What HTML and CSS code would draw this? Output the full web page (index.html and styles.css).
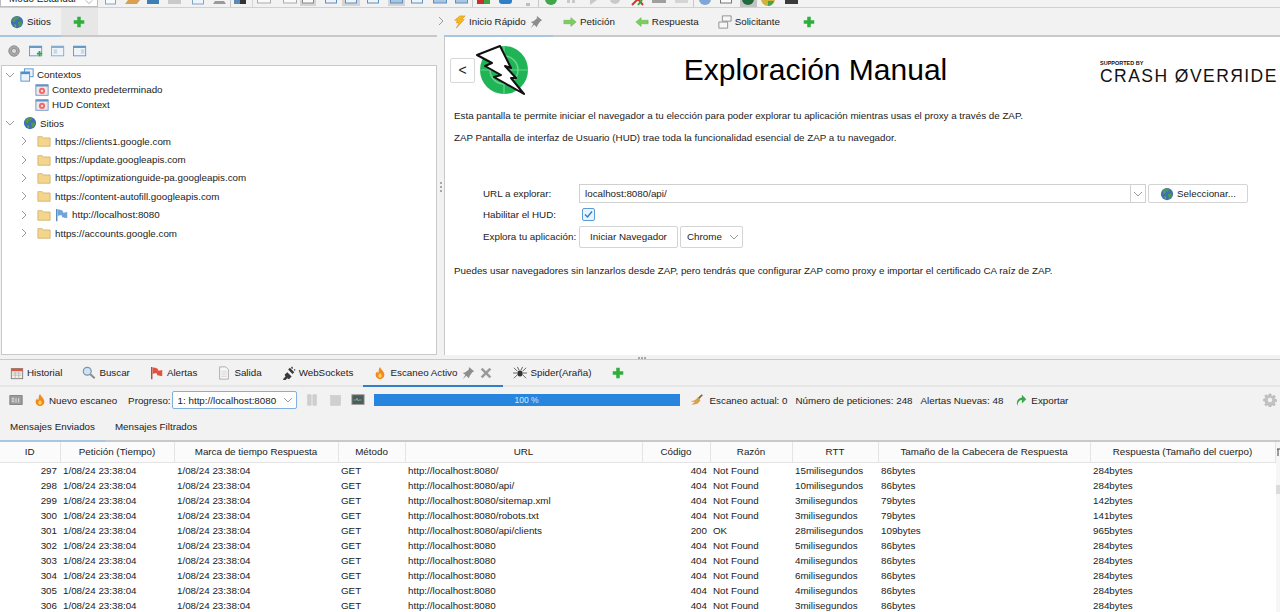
FILE: index.html
```html
<!DOCTYPE html>
<html lang="es">
  <head>
    <meta charset="UTF-8" />
    <title>ZAP - Exploración Manual</title>
    <link rel="stylesheet" href="styles.css">
  </head>
  <body>
    <!-- shared icons -->
    <svg class="defs" width="0" height="0">
      <symbol id="i-globe" viewBox="0 0 16 16">
        <circle cx="8" cy="8" r="7" fill="#3f6fb5"/>
        <path d="M3 4c2-2 5-3 7-2 1 1 0 2-1 3L7 5 6 8 3 8zM9 8l4-1 1 2-2 4-2 0z" fill="#4f9a4a"/>
        <path d="M5 10l2 1v3l-2-1z" fill="#5fa855"/>
      </symbol>
      <symbol id="i-plus" viewBox="0 0 16 16">
        <path d="M6 2h4v4h4v4h-4v4H6v-4H2V6h4z" fill="#2fae3c"/>
      </symbol>
      <symbol id="i-pin" viewBox="0 0 16 16">
        <path d="M9 1l6 5-2 1-3 4-1 3-3-3-4 4 3-5-3-2 3-1 4-3z" fill="#8d8d8d"/>
      </symbol>
      <symbol id="i-bolt" viewBox="0 0 16 16">
        <path d="M9 1h6l-4 4h3L5 15l3-6H5l1-3H3l1-1z" fill="#f5b81f" stroke="#d68a10" stroke-width=".6"/>
      </symbol>
      <symbol id="i-right" viewBox="0 0 16 16">
        <path d="M1 6h8V3l6 5-6 5v-3H1z" fill="#7ccf5c" stroke="#4fa83c" stroke-width=".5"/>
      </symbol>
      <symbol id="i-left" viewBox="0 0 16 16">
        <path d="M15 6H7V3L1 8l6 5v-3h8z" fill="#7ccf5c" stroke="#4fa83c" stroke-width=".5"/>
      </symbol>
      <symbol id="i-windows" viewBox="0 0 16 16">
        <path d="M5 1h10v6H5zM1 8h10v7H1z" fill="#f7f7f7" stroke="#888" stroke-width="1"/>
      </symbol>
      <symbol id="i-flame" viewBox="0 0 16 16">
        <path d="M8 1c1 3 5 5 5 9a5 5 0 0 1-10 0c0-2 1-3 2-4 0 1 0 2 1 2 1-2 0-5 2-7z" fill="#f08a1d"/>
        <path d="M8 8c1 1 2 2 2 3.500a2 2 0 0 1-4 0C6 10 7 9.500 8 8z" fill="#fbd15a"/>
      </symbol>
      <symbol id="i-folder" viewBox="0 0 16 16">
        <path d="M1 3h5l1 1.500h8V14H1z" fill="#f3d68c" stroke="#c9a75c" stroke-width=".8"/>
      </symbol>
      <symbol id="i-context" viewBox="0 0 16 16">
        <rect x="1" y="2" width="14" height="12" fill="#f4e6e6" stroke="#5f94c4"/>
        <rect x="1" y="2" width="14" height="2" fill="#5f94c4"/>
        <circle cx="8" cy="9" r="3.500" fill="#ef6a6a"/>
        <circle cx="8" cy="9" r="1.300" fill="#fde3e3"/>
      </symbol>
      <symbol id="i-windows-blue" viewBox="0 0 16 16">
        <rect x="5" y="1" width="10" height="9" fill="#eaf3fb" stroke="#4d8fc9"/>
        <rect x="1" y="4.500" width="10" height="10.500" fill="#eaf3fb" stroke="#4d8fc9"/>
        <rect x="1" y="4.500" width="10" height="2.500" fill="#4d8fc9"/>
      </symbol>
      <symbol id="i-chev-r" viewBox="0 0 10 10">
        <path d="M3 1l4 4-4 4" fill="none" stroke="#9a9a9a"/>
      </symbol>
      <symbol id="i-chev-d" viewBox="0 0 10 10">
        <path d="M1 3l4 4 4-4" fill="none" stroke="#9a9a9a"/>
      </symbol>
      <symbol id="i-calendar" viewBox="0 0 16 16">
        <rect x="1.500" y="3" width="13" height="11.500" fill="#f6efe0" stroke="#777"/>
        <rect x="1.500" y="3" width="13" height="3" fill="#d8573f"/>
        <path d="M3 8h10M3 10.500h10M6 7v7M10 7v7" stroke="#9aa7b5" stroke-width=".7"/>
      </symbol>
      <symbol id="i-search" viewBox="0 0 16 16">
        <circle cx="6" cy="6" r="4.500" fill="#cfe3f5" stroke="#7c93ad" stroke-width="1.400"/>
        <path d="M9.500 9.500l5 4.500" stroke="#8a8a8a" stroke-width="2.200"/>
      </symbol>
      <symbol id="i-flag" viewBox="0 0 16 16">
        <path d="M2 1v14" stroke="#a04030" stroke-width="1.500"/>
        <path d="M3 2c3-1 4 1 6 1v2c2 0 3 0 5-.500V11c-3 1-4-.5-6-.5V8.500C6 8 5 8 3 9z" fill="#e2533f"/>
      </symbol>
      <symbol id="i-blueflag" viewBox="0 0 16 16">
        <path d="M2 1v14" stroke="#4a7fb5" stroke-width="1.500"/>
        <path d="M3 2c3-1 4 1 6 1v2c2 0 3 0 5-.500V11c-3 1-4-.5-6-.5V8.500C6 8 5 8 3 9z" fill="#6fa5da"/>
      </symbol>
      <symbol id="i-doc" viewBox="0 0 16 16">
        <path d="M3 1h7l3 3v11H3z" fill="#f7f7f7" stroke="#a5a5a5"/>
        <path d="M5 6h6M5 8h6M5 10h6M5 12h6" stroke="#c8c8c8" stroke-width=".7"/>
      </symbol>
      <symbol id="i-plug" viewBox="0 0 16 16">
        <path d="M1 15l3-3-1-2 3-3 5 5-3 3-2-1-3 3zM9 2l5 5-2 2-5-5z" fill="#3a3a3a"/>
        <path d="M11 1l1 2M14 4l1 1" stroke="#3a3a3a" stroke-width="1.500"/>
      </symbol>
      <symbol id="i-x" viewBox="0 0 16 16">
        <path d="M2 4l2-2 4 4 4-4 2 2-4 4 4 4-2 2-4-4-4 4-2-2 4-4z" fill="#9a9a9a"/>
      </symbol>
      <symbol id="i-spider" viewBox="0 0 16 16">
        <ellipse cx="8" cy="8.500" rx="3" ry="3.500" fill="#333"/>
        <path d="M5 6L1 2M5 8H0M5 10l-4 4M11 6l4-4M11 8h5M11 10l4 4M7 5L5 1M9 5l2-4" stroke="#555"/>
      </symbol>
      <symbol id="i-broom" viewBox="0 0 16 16">
        <path d="M14 2l-5 5" stroke="#8b5a2b" stroke-width="2"/>
        <path d="M9 5l3 3c-2 4-5 6-11 5 3-1 4-2 4-3-2 0-3 0-4-1 4 0 6-2 8-4z" fill="#d7a24f"/>
      </symbol>
      <symbol id="i-export" viewBox="0 0 16 16">
        <path d="M4 15C2 10 4 6 9 5V2l5 5-5 5V8C6 8 4 11 4 15z" fill="#3aa84a"/>
      </symbol>
      <symbol id="i-gear" viewBox="0 0 16 16">
        <path d="M7 1h2l.5 2 1.500.6 1.700-1.100 1.400 1.400-1.100 1.700.6 1.500 2 .5v2l-2 .5-.6 1.500 1.100 1.700-1.400 1.400-1.700-1.100-1.500.6-.5 2H7l-.5-2-1.500-.6-1.700 1.100-1.400-1.400 1.100-1.700L2.400 9.500l-2-.5V7l2-.5L3 5 1.900 3.300l1.400-1.400L5 3l1.500-.6z" fill="#c2c2c2" stroke="#a5a5a5" stroke-width=".5"/>
        <circle cx="8" cy="8" r="2.500" fill="#f2f2f2"/>
      </symbol>
    </svg>

    <div class="app">
      <div class="top-toolbar">
        <div class="mode-select"><span>Modo Estándar</span><svg class="chev-mode"><use href="#i-chev-d"/></svg></div>
        <!-- icons of the toolbar, only their lower part is in view -->
        <svg class="toolbar-strip" width="1182" height="8" viewBox="98 0 1182 8">
          <rect x="300" y="0" width="16" height="6" fill="#d4d4d4"/>
          <rect x="342" y="0" width="18" height="6" fill="#d4d4d4"/>
          <rect x="388" y="0" width="17" height="6" fill="#d4d4d4"/>
          <rect x="740" y="0" width="17" height="7" fill="#c4c4c4"/>
          <rect x="105.500" y="-5" width="10" height="9" fill="#fafafa" stroke="#7ea6c9"/>
          <path d="M125 4l3-4h12l-3 4z" fill="#d9a04f"/>
          <rect x="147" y="-5" width="12" height="9" fill="#3f7fb5"/>
          <rect x="168" y="-5" width="13" height="9" fill="#c9c9c9"/>
          <rect x="192.500" y="-5" width="11" height="9" fill="#eef4fa" stroke="#7ea6c9"/>
          <path d="M213 4l2-3h9l2 3z" fill="#9a9a9a"/>
          <path d="M230.500 0v7" stroke="#c8c8c8"/>
          <rect x="234" y="-5" width="6" height="9" fill="#5a88b3"/>
          <rect x="240" y="-5" width="6" height="9" fill="#333"/>
          <path d="M252.500 0v7" stroke="#d4d4d4"/>
          <rect x="257.500" y="-5" width="13" height="8" fill="#fafafa" stroke="#aaa"/>
          <rect x="283.500" y="-5" width="13" height="8" fill="#fafafa" stroke="#aaa"/>
          <rect x="302.500" y="-5" width="11" height="8" fill="#fafafa" stroke="#888"/>
          <rect x="325.500" y="-5" width="11" height="8" fill="#eef4fa" stroke="#5f8fbb"/>
          <rect x="345.500" y="-5" width="11" height="8" fill="#eef4fa" stroke="#5f8fbb"/>
          <rect x="367.500" y="-5" width="11" height="8" fill="#eef4fa" stroke="#5f8fbb"/>
          <rect x="390.500" y="-5" width="12" height="8" fill="#a9c6e3" stroke="#5f8fbb"/>
          <rect x="411.500" y="-5" width="11" height="8" fill="#eef4fa" stroke="#5f8fbb"/>
          <rect x="433.500" y="-5" width="13" height="8" fill="#a9c6e3" stroke="#5f8fbb"/>
          <rect x="455.500" y="-5" width="12" height="8" fill="#a9c6e3" stroke="#5f8fbb"/>
          <path d="M472.500 0v7" stroke="#c8c8c8"/>
          <rect x="477" y="-5" width="7" height="9" fill="#c9302c"/>
          <rect x="484" y="-5" width="6" height="9" fill="#3da53f"/>
          <rect x="499" y="-5" width="13" height="9" rx="3" fill="#2f7fc7"/>
          <path d="M526 3h4v3h-4z" fill="#bdbdbd"/>
          <path d="M538.500 0v7" stroke="#c8c8c8"/>
          <circle cx="551" cy="-1" r="6" fill="#3fa64a"/>
          <rect x="567" y="-5" width="3" height="8" fill="#c9c9c9"/>
          <rect x="572" y="-5" width="3" height="8" fill="#c9c9c9"/>
          <path d="M590 -5l7 5-7 5z" fill="#c9c9c9"/>
          <circle cx="615" cy="-1" r="5" fill="#c9c9c9"/>
          <path d="M632 5l6-6 5 6" fill="none" stroke="#cf3a2c" stroke-width="2"/>
          <path d="M638 5l4-5" stroke="#3da53f" stroke-width="2"/>
          <rect x="652" y="-5" width="14" height="8" fill="#9f9f9f"/>
          <rect x="675" y="-5" width="13" height="8" fill="#d4d4d4"/>
          <path d="M693.500 0v7" stroke="#c8c8c8"/>
          <circle cx="705" cy="-1" r="6" fill="#7ea6d6"/>
          <rect x="720.500" y="-5" width="11" height="8" fill="#fafafa" stroke="#777"/>
          <circle cx="748" cy="-1" r="6" fill="#1f6b3a"/>
          <circle cx="768" cy="-1" r="7" fill="#d0b33c"/>
          <path d="M768 6a7 7 0 0 0 6-5h-6z" fill="#4aa34a"/>
          <rect x="785" y="-5" width="13" height="9" fill="#3a3a3a"/>
        </svg>
      </div>

      <div class="upper">
        <section class="left-panel">
          <div class="tabs">
            <div class="tab tab-sel"><svg class="ic"><use href="#i-globe"/></svg>Sitios</div>
            <div class="tab-add"><svg class="ic"><use href="#i-plus"/></svg></div>
          </div>
          <div class="site-tools">
            <svg class="ic" viewBox="0 0 16 16"><circle cx="8" cy="8" r="6" fill="#a8a8a8" stroke="#8a8a8a"/><circle cx="8" cy="8" r="3" fill="#d8d8d8" stroke="#8a8a8a"/></svg>
            <svg class="ic" viewBox="0 0 16 16"><rect x=".5" y="2.500" width="14" height="11" fill="#eef4fa" stroke="#5f94c4"/><rect x=".5" y="2.500" width="14" height="2" fill="#5f94c4"/><path d="M9 10h2V8h2v2h2v2h-2v2h-2v-2H9z" fill="#2fa53c"/></svg>
            <svg class="ic" viewBox="0 0 16 16"><rect x=".5" y="2.500" width="14" height="11" fill="#eef4fa" stroke="#7ea9d0"/><rect x=".5" y="2.500" width="14" height="2" fill="#7ea9d0"/><path d="M3 6h4v5H3z" fill="#c6d9ea"/></svg>
            <svg class="ic" viewBox="0 0 16 16"><rect x=".5" y="2.500" width="14" height="11" fill="#eef4fa" stroke="#5f94c4"/><rect x=".5" y="2.500" width="14" height="2" fill="#5f94c4"/><path d="M9 6h4v5H9z" fill="#c6d9ea"/></svg>
          </div>
          <div class="tree">
            <div class="node node-ctx lvl-0 node-root-ctx"><svg class="chev"><use href="#i-chev-d"/></svg><svg class="ic"><use href="#i-windows-blue"/></svg>Contextos</div>
            <div class="node node-ctx lvl-1"><svg class="ic"><use href="#i-context"/></svg>Contexto predeterminado</div>
            <div class="node node-ctx lvl-1"><svg class="ic"><use href="#i-context"/></svg>HUD Context</div>
            <div class="node node-sites lvl-0"><svg class="chev"><use href="#i-chev-d"/></svg><svg class="ic"><use href="#i-globe"/></svg>Sitios</div>
            <div class="node lvl-2"><svg class="chev"><use href="#i-chev-r"/></svg><svg class="ic"><use href="#i-folder"/></svg>https://clients1.google.com</div>
            <div class="node lvl-2"><svg class="chev"><use href="#i-chev-r"/></svg><svg class="ic"><use href="#i-folder"/></svg>https://update.googleapis.com</div>
            <div class="node lvl-2"><svg class="chev"><use href="#i-chev-r"/></svg><svg class="ic"><use href="#i-folder"/></svg>https://optimizationguide-pa.googleapis.com</div>
            <div class="node lvl-2"><svg class="chev"><use href="#i-chev-r"/></svg><svg class="ic"><use href="#i-folder"/></svg>https://content-autofill.googleapis.com</div>
            <div class="node lvl-2"><svg class="chev"><use href="#i-chev-r"/></svg><svg class="ic"><use href="#i-folder"/></svg><svg class="ic ic-flag"><use href="#i-blueflag"/></svg>http://localhost:8080</div>
            <div class="node lvl-2"><svg class="chev"><use href="#i-chev-r"/></svg><svg class="ic"><use href="#i-folder"/></svg>https://accounts.google.com</div>
          </div>
        </section>

        <div class="v-split">
          <svg class="chev"><use href="#i-chev-r"/></svg>
          <svg class="grip" width="3" height="11" viewBox="0 0 3 11"><path d="M1 0h2v2H1zM1 4h2v2H1zM1 8h2v2H1z" fill="#a8a8a8"/></svg>
        </div>

        <section class="right-panel">
          <div class="tabs">
            <div class="tab tab-sel tab-quick"><svg class="ic"><use href="#i-bolt"/></svg>Inicio Rápido<svg class="ic"><use href="#i-pin"/></svg></div>
            <div class="tab"><svg class="ic"><use href="#i-right"/></svg>Petición</div>
            <div class="tab tab-resp"><svg class="ic"><use href="#i-left"/></svg>Respuesta</div>
            <div class="tab"><svg class="ic"><use href="#i-windows"/></svg>Solicitante</div>
            <div class="tab tab-plus"><svg class="ic"><use href="#i-plus"/></svg></div>
          </div>
          <div class="quick">
            <div class="quick-head">
              <button class="back">&lt;</button>
              <svg class="zap-logo" width="56" height="56" viewBox="0 0 56 56">
                <circle cx="29" cy="28" r="24" fill="#1fb455"/>
                <circle cx="29" cy="28" r="14" fill="none" stroke="#6fd28f" stroke-width="1.500"/>
                <path d="M29 4v48M5 28h48" stroke="#6fd28f" stroke-width="1.200"/>
                <path d="M2 13L25 4 36 26 30 24 41 36 36 36 49 52 19 35 26 33 10 24 17 21z" fill="#fff" stroke="#111" stroke-width="2" stroke-linejoin="round"/>
              </svg>
              <h1>Exploración Manual</h1>
              <div class="crash">
                <div class="crash-small">SUPPORTED BY</div>
                <div class="crash-big">CRASH ØVERЯIDE</div>
              </div>
            </div>
            <p class="intro">Esta pantalla te permite iniciar el navegador a tu elección para poder explorar tu aplicación mientras usas el proxy a través de ZAP.</p>
            <p class="intro intro-2">ZAP Pantalla de interfaz de Usuario (HUD) trae toda la funcionalidad esencial de ZAP a tu navegador.</p>
            <div class="launch">
              <div class="launch-label">URL a explorar:</div>
              <div class="url-row">
                <div class="url-input">localhost:8080/api/</div>
                <div class="url-drop"><svg class="chev"><use href="#i-chev-d"/></svg></div>
                <button class="btn btn-pick"><svg class="ic"><use href="#i-globe"/></svg>Seleccionar...</button>
              </div>
              <div class="launch-label">Habilitar el HUD:</div>
              <div class="check-cell">
                <svg class="check" width="13" height="13" viewBox="0 0 13 13"><rect x=".5" y=".5" width="12" height="12" rx="1.500" fill="#eaf3fb" stroke="#5b9bd5"/><path d="M3 6.500l2.500 2.500L10 3.500" fill="none" stroke="#2f7fc7" stroke-width="1.400"/></svg>
              </div>
              <div class="launch-label">Explora tu aplicación:</div>
              <div class="browser-row">
                <button class="btn btn-start">Iniciar Navegador</button>
                <div class="btn btn-browser">Chrome<svg class="chev"><use href="#i-chev-d"/></svg></div>
              </div>
            </div>
            <p class="intro intro-3">Puedes usar navegadores sin lanzarlos desde ZAP, pero tendrás que configurar ZAP como proxy e importar el certificado CA raíz de ZAP.</p>
          </div>
        </section>
      </div>

      <div class="h-split"><span></span><span></span><span></span></div>

      <section class="lower">
        <div class="tabs tabs-lower">
          <div class="tab"><svg class="ic"><use href="#i-calendar"/></svg>Historial</div>
          <div class="tab"><svg class="ic"><use href="#i-search"/></svg>Buscar</div>
          <div class="tab"><svg class="ic"><use href="#i-flag"/></svg>Alertas</div>
          <div class="tab"><svg class="ic"><use href="#i-doc"/></svg>Salida</div>
          <div class="tab"><svg class="ic"><use href="#i-plug"/></svg>WebSockets</div>
          <div class="tab tab-active"><svg class="ic"><use href="#i-flame"/></svg>Escaneo Activo<svg class="ic ic-pin"><use href="#i-pin"/></svg><svg class="ic ic-close"><use href="#i-x"/></svg></div>
          <div class="tab"><svg class="ic"><use href="#i-spider"/></svg>Spider(Araña)</div>
          <div class="tab"><svg class="ic"><use href="#i-plus"/></svg></div>
        </div>

        <div class="scan-bar">
          <svg class="ic scan-sheet" viewBox="0 0 16 16"><rect x="1" y="3" width="14" height="10" fill="#9c9c9c" stroke="#777"/><path d="M3 6h3M3 8h3M3 10h3M8 6v5M11 6v5" stroke="#e8e8e8"/></svg>
          <svg class="ic scan-flame"><use href="#i-flame"/></svg>
          <span class="scan-new">Nuevo escaneo</span>
          <span class="scan-prog">Progreso:</span>
          <div class="scan-select">1: http://localhost:8080<svg class="chev"><use href="#i-chev-d"/></svg></div>
          <svg class="ic scan-pause" viewBox="0 0 16 16"><path d="M3 2h4v12H3zM9 2h4v12H9z" fill="#cfcfcf" stroke="#bbb" stroke-width=".5"/></svg>
          <svg class="ic scan-stop" viewBox="0 0 16 16"><rect x="2" y="3" width="11" height="11" fill="#cfcfcf" stroke="#bbb" stroke-width=".5"/></svg>
          <svg class="ic scan-mon" viewBox="0 0 16 16"><rect x="1" y="2" width="14" height="11" fill="#4f5a5a" stroke="#999"/><path d="M3 8h3l1-2 1 3 1-1h3" fill="none" stroke="#7fd0a0" stroke-width=".8"/></svg>
          <div class="progress">100 %</div>
          <svg class="ic scan-broom"><use href="#i-broom"/></svg>
          <span class="scan-cur">Escaneo actual: 0</span>
          <span class="scan-num">Número de peticiones: 248</span>
          <span class="scan-alerts">Alertas Nuevas: 48</span>
          <svg class="ic scan-export"><use href="#i-export"/></svg>
          <span>Exportar</span>
          <svg class="ic scan-gear"><use href="#i-gear"/></svg>
        </div>

        <div class="sub-tabs">
          <div class="sub-tab sub-tab-sel">Mensajes Enviados</div>
          <div class="sub-tab">Mensajes Filtrados</div>
        </div>

        <div class="table-wrap">
          <table class="msgs">
            <colgroup>
              <col class="c-id"><col class="c-req"><col class="c-resp"><col class="c-met"><col class="c-url"><col class="c-code"><col class="c-reason"><col class="c-rtt"><col class="c-head"><col class="c-body">
            </colgroup>
            <thead>
              <tr><th>ID</th><th>Petición (Tiempo)</th><th>Marca de tiempo Respuesta</th><th>Método</th><th>URL</th><th>Código</th><th>Razón</th><th>RTT</th><th>Tamaño de la Cabecera de Respuesta</th><th>Respuesta (Tamaño del cuerpo)</th></tr>
            </thead>
            <tbody>
              <tr><td class="num">297</td><td>1/08/24 23:38:04</td><td>1/08/24 23:38:04</td><td>GET</td><td>http://localhost:8080/</td><td class="num">404</td><td>Not Found</td><td>15milisegundos</td><td>86bytes</td><td>284bytes</td></tr>
              <tr><td class="num">298</td><td>1/08/24 23:38:04</td><td>1/08/24 23:38:04</td><td>GET</td><td>http://localhost:8080/api/</td><td class="num">404</td><td>Not Found</td><td>10milisegundos</td><td>86bytes</td><td>284bytes</td></tr>
              <tr><td class="num">299</td><td>1/08/24 23:38:04</td><td>1/08/24 23:38:04</td><td>GET</td><td>http://localhost:8080/sitemap.xml</td><td class="num">404</td><td>Not Found</td><td>3milisegundos</td><td>79bytes</td><td>142bytes</td></tr>
              <tr><td class="num">300</td><td>1/08/24 23:38:04</td><td>1/08/24 23:38:04</td><td>GET</td><td>http://localhost:8080/robots.txt</td><td class="num">404</td><td>Not Found</td><td>3milisegundos</td><td>79bytes</td><td>141bytes</td></tr>
              <tr><td class="num">301</td><td>1/08/24 23:38:04</td><td>1/08/24 23:38:04</td><td>GET</td><td>http://localhost:8080/api/clients</td><td class="num">200</td><td>OK</td><td>28milisegundos</td><td>109bytes</td><td>965bytes</td></tr>
              <tr><td class="num">302</td><td>1/08/24 23:38:04</td><td>1/08/24 23:38:04</td><td>GET</td><td>http://localhost:8080</td><td class="num">404</td><td>Not Found</td><td>5milisegundos</td><td>86bytes</td><td>284bytes</td></tr>
              <tr><td class="num">303</td><td>1/08/24 23:38:04</td><td>1/08/24 23:38:04</td><td>GET</td><td>http://localhost:8080</td><td class="num">404</td><td>Not Found</td><td>4milisegundos</td><td>86bytes</td><td>284bytes</td></tr>
              <tr><td class="num">304</td><td>1/08/24 23:38:04</td><td>1/08/24 23:38:04</td><td>GET</td><td>http://localhost:8080</td><td class="num">404</td><td>Not Found</td><td>6milisegundos</td><td>86bytes</td><td>284bytes</td></tr>
              <tr><td class="num">305</td><td>1/08/24 23:38:04</td><td>1/08/24 23:38:04</td><td>GET</td><td>http://localhost:8080</td><td class="num">404</td><td>Not Found</td><td>4milisegundos</td><td>86bytes</td><td>284bytes</td></tr>
              <tr><td class="num">306</td><td>1/08/24 23:38:04</td><td>1/08/24 23:38:04</td><td>GET</td><td>http://localhost:8080</td><td class="num">404</td><td>Not Found</td><td>3milisegundos</td><td>86bytes</td><td>284bytes</td></tr>
            </tbody>
          </table>
          <div class="table-side">
            <svg class="corner" width="6" height="10" viewBox="0 0 6 10"><path d="M1 1h5M2 1v7M5 3v6" stroke="#444" fill="none"/></svg>
            <div class="thumb"></div>
          </div>
        </div>
      </section>
    </div>
  </body>
</html>
```

FILE: styles.css
```css
* {
  margin: 0;
  padding: 0;
  box-sizing: border-box;
}
body {
  font-family: "Liberation Sans", Arial, sans-serif;
  font-size: 9.8px;
  color: #222;
  background-color: #f2f2f2;
  overflow: hidden;
}
.defs {
  display: block;
  height: 0;
}
.app {
  width: 1280px;
  height: 612px;
  display: flex;
  flex-direction: column;
  overflow: hidden;
}
.ic {
  width: 14px;
  height: 14px;
  flex: none;
}
.chev {
  width: 10px;
  height: 10px;
  flex: none;
}

/* top toolbar, cut by the window */
.top-toolbar {
  height: 8px;
  flex: none;
  display: flex;
  overflow: hidden;
  border-bottom: 1px solid #d0d0d0;
}
.mode-select {
  width: 98px;
  height: 7px;
  flex: none;
  display: flex;
  justify-content: space-between;
  align-items: flex-end;
  padding: 0 4px 0 8px;
  background-color: #fff;
  border: 1px solid #bdbdbd;
  border-top: none;
  font-size: 10px;
  line-height: 13px;
  overflow: hidden;
}
.mode-select span {
  margin-bottom: 1px;
}
.chev-mode {
  width: 8px;
  height: 8px;
}
.toolbar-strip {
  flex: none;
}

/* tabs */
.tabs {
  height: 29px;
  flex: none;
  display: flex;
  border-bottom: 2px solid #c9c9c9;
}
.tab {
  display: flex;
  align-items: center;
  gap: 3px;
  padding: 0 10px;
  margin-bottom: -2px;
  border-bottom: 2px solid transparent;
  white-space: nowrap;
}
.tab-sel {
  border-bottom-color: #a8c6e2;
}
.tab-add {
  width: 37px;
  display: flex;
  justify-content: center;
  align-items: center;
  background-color: #e7e7e7;
}

/* upper area */
.upper {
  height: 347px;
  flex: none;
  display: flex;
}
.left-panel {
  width: 437px;
  flex: none;
  display: flex;
  flex-direction: column;
}
.site-tools {
  height: 28px;
  flex: none;
  display: flex;
  align-items: center;
  gap: 8px;
  padding-left: 7px;
}
.tree {
  flex: 1;
  margin-left: 1px;
  padding-top: 1px;
  background-color: #fff;
  border: 1px solid #c9c9c9;
}
.node {
  display: flex;
  align-items: center;
  gap: 3px;
  height: 18.4px;
  white-space: nowrap;
}
.node-ctx {
  height: 15px;
}
.node-sites {
  height: 18px;
  margin-top: 2px;
}
.lvl-0 {
  padding-left: 3px;
}
.lvl-0 .chev {
  margin-right: 5px;
}
.node-root-ctx.lvl-0 .chev {
  margin-right: 2px;
}
.lvl-1 {
  padding-left: 33px;
}
.lvl-2 {
  padding-left: 17px;
  gap: 4px;
}
.lvl-2 .chev {
  margin-right: 4px;
}
.ic-flag {
  margin-right: -1px;
}
.v-split {
  width: 7px;
  flex: none;
  display: flex;
  flex-direction: column;
  align-items: center;
  padding-top: 8px;
}
.grip {
  margin-top: 156px;
}
.right-panel {
  flex: 1;
  display: flex;
  flex-direction: column;
  min-width: 0;
}
.tab-quick {
  width: 109px;
  padding-left: 8px;
}
.tab-resp {
  padding-right: 9px;
}
.tab-plus {
  margin-left: 2px;
}
.quick {
  flex: 1;
  background-color: #fff;
  border-left: 1px solid #c9c9c9;
}
.quick-head {
  height: 66px;
  display: flex;
  align-items: center;
  padding-left: 5px;
  padding-right: 2px;
}
.back {
  width: 25px;
  height: 25px;
  flex: none;
  background-color: #fff;
  border: 1px solid #d8d8d8;
  border-radius: 2px;
  font-family: "Liberation Sans", Arial, sans-serif;
  font-size: 14px;
  color: #222;
}
.zap-logo {
  flex: none;
}
h1 {
  flex: 1;
  text-align: center;
  font-size: 30px;
  font-weight: 400;
  color: #000;
}
.crash {
  width: 178px;
  flex: none;
  color: #111;
  padding-top: 4px;
}
.crash-small {
  font-size: 5.5px;
  font-weight: 700;
  line-height: 8px;
}
.crash-big {
  font-size: 17.5px;
  letter-spacing: 1.45px;
  line-height: 18px;
  white-space: nowrap;
}
.intro {
  padding-left: 9px;
  margin-top: 6px;
  line-height: 14px;
  white-space: nowrap;
}
.intro-2 {
  margin-top: 8px;
}
.intro-3 {
  margin-top: 16px;
}
.launch {
  display: grid;
  grid-template-columns: 96px 1fr;
  grid-template-rows: 21px 21px 23px;
  align-items: center;
  margin-top: 38px;
  padding-left: 38px;
  padding-right: 32px;
}
.launch-label {
  white-space: nowrap;
}
.url-row {
  display: flex;
  height: 19px;
}
.url-input {
  flex: 1;
  display: flex;
  align-items: center;
  padding-left: 5px;
  background-color: #fff;
  border: 1px solid #d0d0d0;
  border-right: none;
}
.url-drop {
  width: 16px;
  display: flex;
  justify-content: center;
  align-items: center;
  border: 1px solid #d0d0d0;
}
.btn {
  font-family: "Liberation Sans", Arial, sans-serif;
  font-size: 9.8px;
  color: #222;
  background-color: #fff;
  border: 1px solid #d4d4d4;
  border-radius: 2px;
}
.btn-pick {
  width: 100px;
  margin-left: 2px;
  display: flex;
  justify-content: center;
  align-items: center;
  gap: 3px;
}
.check-cell {
  display: flex;
  padding-left: 3px;
}
.browser-row {
  display: flex;
  height: 22px;
  gap: 2px;
}
.btn-start {
  width: 99px;
}
.btn-browser {
  width: 63px;
  display: flex;
  align-items: center;
  justify-content: space-between;
  padding: 0 3px 0 6px;
}

/* splitter between upper and lower */
.h-split {
  height: 5px;
  flex: none;
  display: flex;
  justify-content: center;
  align-items: center;
  gap: 1px;
  padding-left: 4px;
}
.h-split span {
  width: 2px;
  height: 2px;
  background-color: #a8a8a8;
}

/* lower area */
.lower {
  flex: 1;
  display: flex;
  flex-direction: column;
  min-height: 0;
  border-top: 1px solid #c9c9c9;
  margin-top: -1px;
}
.tabs-lower {
  height: 27px;
  border-bottom: 2px solid #e6e6e6;
}
.tab-active {
  border-bottom-color: #2f7fcb;
}
.ic-pin {
  margin-left: 1px;
}
.ic-close {
  margin-left: 1px;
}
.scan-bar {
  height: 26px;
  flex: none;
  display: flex;
  align-items: center;
  padding-left: 9px;
  white-space: nowrap;
}
.scan-flame {
  margin-left: 10px;
  margin-right: 2px;
}
.scan-prog {
  margin-left: 11px;
  margin-right: 1px;
}
.scan-select {
  width: 125px;
  height: 18px;
  display: flex;
  align-items: center;
  justify-content: space-between;
  padding: 0 3px 0 5px;
  background-color: #fff;
  border: 1px solid #7fb0de;
  border-radius: 2px;
}
.scan-pause {
  margin-left: 8px;
}
.scan-stop {
  margin-left: 10px;
}
.scan-mon {
  margin-left: 8px;
}
.progress {
  width: 306px;
  height: 12px;
  margin-left: 9px;
  background-color: #2785dd;
  color: #d5e8f8;
  font-size: 8.5px;
  line-height: 12px;
  text-align: center;
}
.scan-broom {
  margin-left: 10px;
  margin-right: 6px;
}
.scan-num {
  margin-left: 8px;
}
.scan-alerts {
  margin-left: 8px;
}
.scan-export {
  margin-left: 11px;
  margin-right: 3px;
}
.scan-gear {
  margin-left: auto;
  margin-right: 3px;
}
.sub-tabs {
  height: 29px;
  flex: none;
  display: flex;
  border-bottom: 2px solid #c9c9c9;
}
.sub-tab {
  display: flex;
  align-items: center;
  padding: 0 10px;
  margin-bottom: -2px;
  border-bottom: 2px solid transparent;
}
.sub-tab-sel {
  border-bottom-color: #a8c6e2;
}
.table-wrap {
  flex: 1;
  display: flex;
  min-height: 0;
  overflow: hidden;
  background-color: #fff;
}
.msgs {
  width: 1275px;
  flex: none;
  align-self: flex-start;
  table-layout: fixed;
  border-collapse: collapse;
}
.c-id { width: 60px; }
.c-req { width: 114px; }
.c-resp { width: 164px; }
.c-met { width: 67px; }
.c-url { width: 237px; }
.c-code { width: 68px; }
.c-reason { width: 82px; }
.c-rtt { width: 86px; }
.c-head { width: 212px; }
.c-body { width: 185px; }
th {
  height: 20px;
  font-weight: 400;
  text-align: center;
  background-color: #fbfbfb;
  border-right: 1px solid #e4e4e4;
  border-bottom: 1px solid #e4e4e4;
}
td {
  height: 15px;
  padding: 0 3px;
  line-height: 15px;
  white-space: nowrap;
}
td.num {
  text-align: right;
}
.table-side {
  flex: 1;
  background-color: #f6f6f6;
  position: relative;
}
.corner {
  display: block;
  margin: 6px 0 0 0;
}
.thumb {
  position: absolute;
  top: 43px;
  left: 0;
  right: 0;
  height: 9px;
  background-color: #dcdcdc;
}
```
